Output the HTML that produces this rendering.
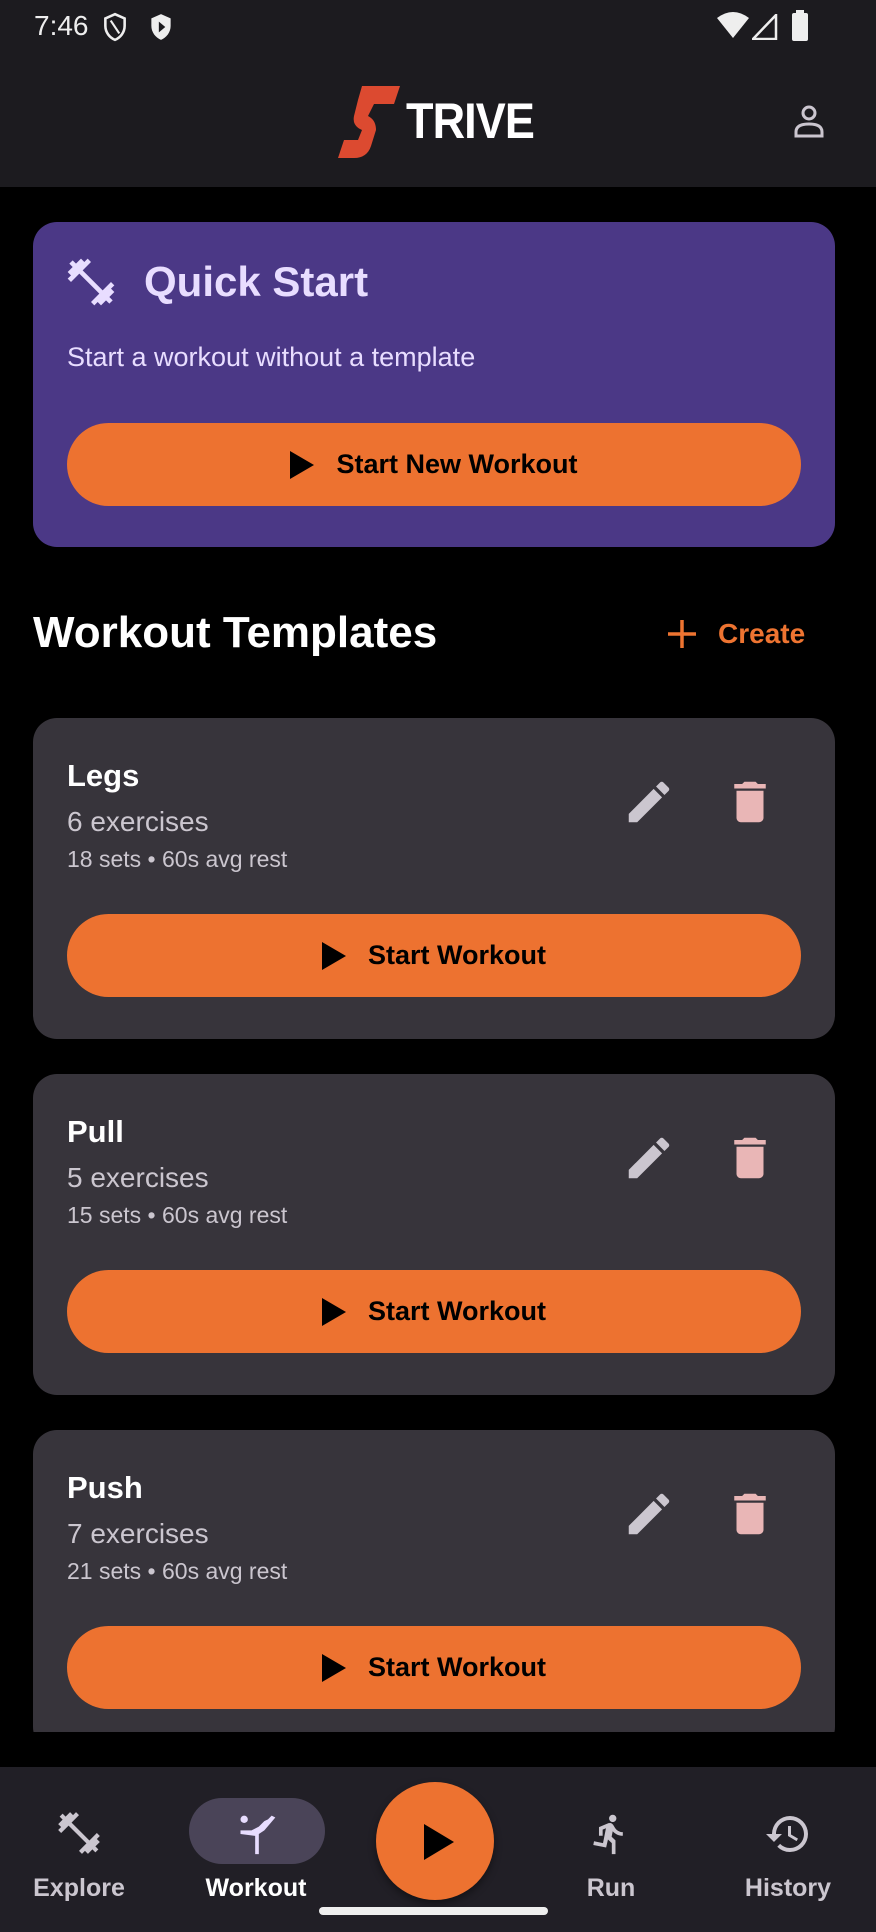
<!DOCTYPE html>
<html><head><meta charset="utf-8"><style>
*{margin:0;padding:0;box-sizing:border-box}
body{width:876px;height:1932px;background:#000;font-family:"Liberation Sans",sans-serif;position:relative;overflow:hidden;color:#fff}
.abs{position:absolute}
.hdr{left:0;top:0;width:876px;height:187px;background:#1c1b1f}
.card{left:33px;width:802px;border-radius:24px;background:#37343b}
.btn{position:absolute;left:34px;width:734px;height:83px;border-radius:42px;background:#ed7230;color:#000;font-size:27px;font-weight:bold;display:flex;align-items:center;justify-content:center}
.btn svg{margin-right:22px}
.t{position:absolute;left:34px;white-space:nowrap}
.lab{position:absolute;top:1874px;font-size:25px;color:#cbc6cf;transform:translateX(-50%);font-weight:bold}
</style></head><body>
<div class="abs hdr"></div>
<div class="abs" style="left:34px;top:10px;font-size:28px;color:#eee">7:46</div>
<svg class="abs" style="left:102px;top:12px" width="26" height="30" viewBox="0 0 24 28"><path d="M12 2L3 6v7c0 6 4 11 9 13 5-2 9-7 9-13V6z" fill="none" stroke="#eee" stroke-width="2.4"/><path d="M8 8l8 12" stroke="#eee" stroke-width="2"/></svg>
<svg class="abs" style="left:148px;top:12px" width="26" height="30" viewBox="0 0 24 28"><path d="M12 2L3 6v7c0 6 4 11 9 13 5-2 9-7 9-13V6z" fill="#eee"/><path d="M10 9l6 5-6 5z" fill="#1c1b1f"/></svg>
<svg class="abs" style="left:716px;top:12px" width="34" height="28" viewBox="0 0 34 28"><path d="M17 26L1 6Q17-6 33 6z" fill="#eee"/></svg>
<svg class="abs" style="left:752px;top:14px" width="26" height="26" viewBox="0 0 26 26"><path d="M24 1V25H1z" fill="none" stroke="#eee" stroke-width="2.5"/></svg>
<div class="abs" style="left:792px;top:13px;width:16px;height:28px;background:#eee;border-radius:2px"></div>
<div class="abs" style="left:796px;top:10px;width:8px;height:4px;background:#eee"></div>
<svg class="abs" style="left:338px;top:86px" width="62" height="72" viewBox="0 0 62 72"><path d="M24 0H62L56 18H36L30 30Q38 34 38 44L33 60Q29 72 16 72H0L6 54H20L24 44Q14 40 16 30L20 14Q24 0 24 0Z" fill="#dc4a30"/></svg>
<div class="abs" style="left:406px;top:92px;font-size:50px;font-weight:bold;letter-spacing:-1px;transform:scaleX(0.9);transform-origin:left">TRIVE</div>
<svg class="abs" style="left:793px;top:104px" width="32" height="34" viewBox="0 0 32 34"><circle cx="16" cy="9" r="6" fill="none" stroke="#cbc6cf" stroke-width="3"/><path d="M3 32V28Q3 20 16 20T29 28V32z" fill="none" stroke="#cbc6cf" stroke-width="3"/></svg>

<div class="abs card" style="top:222px;height:325px;background:#4b3886">
 <svg class="abs" style="left:30px;top:32px" width="56" height="56" viewBox="0 0 24 24"><path d="M20.57 14.86L22 13.43 20.57 12 17 15.57 8.43 7 12 3.43 10.57 2 9.14 3.43 7.71 2 5.57 4.14 4.14 2.71 2.71 4.14l1.43 1.43L2 7.71l1.43 1.43L2 10.57 3.43 12 7 8.43 15.57 17 12 20.57 13.43 22l1.43-1.43L16.29 22l2.14-2.140 1.43 1.43 1.43-1.43-1.43-1.43L22 16.29z" fill="#e8ddff"/></svg>
 <div class="t" style="left:111px;top:36px;font-size:42px;font-weight:bold;color:#e8ddff">Quick Start</div>
 <div class="t" style="top:120px;font-size:27px;color:#e8ddff">Start a workout without a template</div>
 <div class="btn" style="top:201px"><svg width="24" height="28" viewBox="0 0 24 28"><path d="M0 0L24 14 0 28z"/></svg>Start New Workout</div>
</div>

<div class="abs" style="left:33px;top:608px;font-size:44px;font-weight:bold">Workout Templates</div>
<svg class="abs" style="left:666px;top:618px" width="32" height="32" viewBox="0 0 32 32"><path d="M16 2V30M2 16H30" stroke="#ee7431" stroke-width="3.5"/></svg>
<div class="abs" style="left:718px;top:618px;font-size:28px;font-weight:bold;color:#ee7431">Create</div>

<div class="abs" style="left:0;top:0;width:876px;height:1732px;overflow:hidden;pointer-events:none">
<div class="abs card" style="top:718px;height:321px">
 <div class="t" style="top:40px;font-size:31px;font-weight:bold">Legs</div>
 <div class="t" style="top:88px;font-size:28px;color:#cbc6cf">6 exercises</div>
 <div class="t" style="top:128px;font-size:23px;color:#cbc6cf">18 sets • 60s avg rest</div>
 <svg class="abs" style="left:589px;top:57px" width="54" height="54" viewBox="0 0 24 24"><path d="M3 17.25V21h3.75L17.81 9.94l-3.75-3.75zM20.71 7.04a1 1 0 000-1.41l-2.34-2.34a1 1 0 00-1.41 0l-1.83 1.83 3.75 3.75z" fill="#cbc6cf"/></svg>
 <svg class="abs" style="left:690px;top:57px" width="54" height="54" viewBox="0 0 24 24"><path d="M6 19c0 1.1.9 2 2 2h8c1.1 0 2-.9 2-2V7H6zM19 4h-3.5l-1-1h-5l-1 1H5v2h14z" fill="#e9b6b6"/></svg>
 <div class="btn" style="top:196px"><svg width="24" height="28" viewBox="0 0 24 28"><path d="M0 0L24 14 0 28z"/></svg>Start Workout</div>
</div>
<div class="abs card" style="top:1074px;height:321px">
 <div class="t" style="top:40px;font-size:31px;font-weight:bold">Pull</div>
 <div class="t" style="top:88px;font-size:28px;color:#cbc6cf">5 exercises</div>
 <div class="t" style="top:128px;font-size:23px;color:#cbc6cf">15 sets • 60s avg rest</div>
 <svg class="abs" style="left:589px;top:57px" width="54" height="54" viewBox="0 0 24 24"><path d="M3 17.25V21h3.75L17.81 9.94l-3.75-3.75zM20.71 7.04a1 1 0 000-1.41l-2.34-2.34a1 1 0 00-1.41 0l-1.83 1.83 3.75 3.75z" fill="#cbc6cf"/></svg>
 <svg class="abs" style="left:690px;top:57px" width="54" height="54" viewBox="0 0 24 24"><path d="M6 19c0 1.1.9 2 2 2h8c1.1 0 2-.9 2-2V7H6zM19 4h-3.5l-1-1h-5l-1 1H5v2h14z" fill="#e9b6b6"/></svg>
 <div class="btn" style="top:196px"><svg width="24" height="28" viewBox="0 0 24 28"><path d="M0 0L24 14 0 28z"/></svg>Start Workout</div>
</div>
<div class="abs card" style="top:1430px;height:321px">
 <div class="t" style="top:40px;font-size:31px;font-weight:bold">Push</div>
 <div class="t" style="top:88px;font-size:28px;color:#cbc6cf">7 exercises</div>
 <div class="t" style="top:128px;font-size:23px;color:#cbc6cf">21 sets • 60s avg rest</div>
 <svg class="abs" style="left:589px;top:57px" width="54" height="54" viewBox="0 0 24 24"><path d="M3 17.25V21h3.75L17.81 9.94l-3.75-3.75zM20.71 7.04a1 1 0 000-1.41l-2.34-2.34a1 1 0 00-1.41 0l-1.83 1.83 3.75 3.75z" fill="#cbc6cf"/></svg>
 <svg class="abs" style="left:690px;top:57px" width="54" height="54" viewBox="0 0 24 24"><path d="M6 19c0 1.1.9 2 2 2h8c1.1 0 2-.9 2-2V7H6zM19 4h-3.5l-1-1h-5l-1 1H5v2h14z" fill="#e9b6b6"/></svg>
 <div class="btn" style="top:196px"><svg width="24" height="28" viewBox="0 0 24 28"><path d="M0 0L24 14 0 28z"/></svg>Start Workout</div>
</div>
</div>

<div class="abs" style="left:0;top:1767px;width:876px;height:165px;background:#211f26"></div>
<svg class="abs" style="left:54px;top:1808px" width="50" height="50" viewBox="0 0 24 24"><path d="M20.57 14.86L22 13.43 20.57 12 17 15.57 8.43 7 12 3.43 10.57 2 9.14 3.43 7.71 2 5.57 4.14 4.14 2.71 2.71 4.14l1.43 1.43L2 7.71l1.43 1.43L2 10.57 3.43 12 7 8.43 15.57 17 12 20.57 13.43 22l1.43-1.43L16.29 22l2.14-2.14 1.43 1.43 1.43-1.43-1.43-1.43L22 16.29z" fill="#cbc6cf"/></svg>
<div class="abs" style="left:189px;top:1798px;width:136px;height:66px;border-radius:33px;background:#4a4458"></div>
<svg class="abs" style="left:234px;top:1812px" width="46" height="44" viewBox="0 0 24 24"><circle cx="5" cy="4" r="2" fill="#e8ddff"/><path d="M20 2l2 1-6 7-3 2v11h-2V13l-8-1V10l6 0 4-2 3-3 2-1z" fill="#e8ddff"/></svg>
<div class="lab" style="left:79px">Explore</div>
<div class="lab" style="left:256px;color:#fff">Workout</div>
<div class="abs" style="left:376px;top:1782px;width:118px;height:118px;border-radius:50%;background:#ed7230;box-shadow:0 4px 8px rgba(0,0,0,.4)"></div>
<svg class="abs" style="left:424px;top:1824px" width="30" height="36" viewBox="0 0 30 36"><path d="M0 0L30 18 0 36z"/></svg>
<svg class="abs" style="left:588px;top:1810px" width="44" height="48" viewBox="0 0 24 24"><path d="M13.49 5.48c1.1 0 2-.9 2-2s-.9-2-2-2-2 .9-2 2 .9 2 2 2zm-3.6 13.9l1-4.4 2.1 2v6h2v-7.5l-2.1-2 .6-3c1.3 1.5 3.3 2.5 5.5 2.5v-2c-1.9 0-3.5-1-4.3-2.4l-1-1.6c-.4-.6-1-1-1.7-1-.3 0-.5.1-.8.1l-5.2 2.2v4.7h2v-3.4l1.8-.7-1.6 8.1-4.9-1-.4 2 7 1.4z" fill="#cbc6cf"/></svg>
<div class="lab" style="left:611px">Run</div>
<svg class="abs" style="left:764px;top:1810px" width="48" height="48" viewBox="0 0 24 24"><path d="M13 3a9 9 0 0 0-9 9H1l3.89 3.89.07.14L9 12H6c0-3.87 3.13-7 7-7s7 3.13 7 7-3.13 7-7 7c-1.93 0-3.68-.79-4.94-2.06l-1.42 1.42A8.95 8.95 0 0 0 13 21a9 9 0 0 0 0-18zm-1 5v5l4.28 2.54.72-1.21-3.5-2.08V8z" fill="#cbc6cf"/></svg>
<div class="lab" style="left:788px">History</div>
<div class="abs" style="left:319px;top:1907px;width:229px;height:8px;border-radius:4px;background:#eee"></div>
</body></html>
